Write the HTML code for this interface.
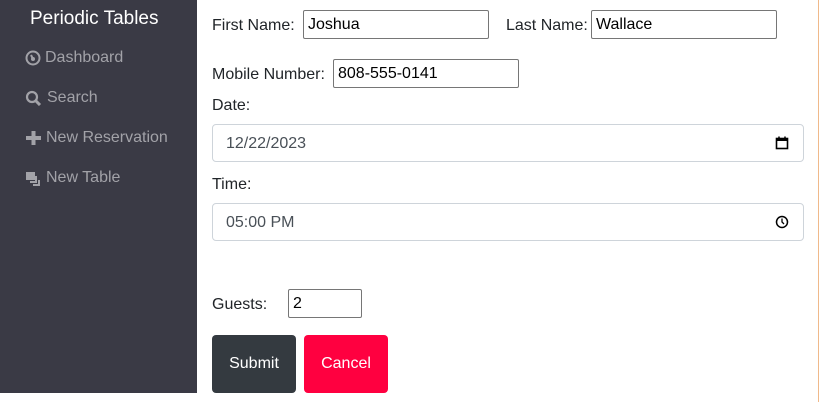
<!DOCTYPE html>
<html><head><meta charset="utf-8"><style>
*{box-sizing:border-box;margin:0;padding:0}
body{width:820px;height:402px;background:#fff;font-family:"Liberation Sans",sans-serif;position:relative;overflow:hidden;color:#212529}
.side{position:absolute;left:0;top:0;width:197px;height:393px;background:#3a3a45}
.title{position:absolute;left:30px;top:8px;color:#fff;font-size:19px}
.nav{position:absolute;left:25px;color:#a2a2a8;font-size:16px;display:flex;align-items:center}
.nav svg{margin-right:4px}
.a{position:absolute;font-size:16px;color:#212529}
.in{position:absolute;border:1px solid #767676;border-radius:2px;height:29px;font-size:16px;color:#000;padding:5px 0 0 4px}
.fc{position:absolute;left:212px;width:592px;height:38px;border:1px solid #ced4da;border-radius:4px;font-size:16px;color:#495057;padding:10px 0 0 13px}
.fc svg{position:absolute;right:14px;top:11px}
.btn{position:absolute;top:335px;width:84px;height:58px;border-radius:4px;color:#fff;font-size:16px;text-align:center;line-height:58px}
</style></head><body>
<div class="side">
<div class="title">Periodic Tables</div>
<div class="nav" style="top:49px"><svg width="16" height="16" viewBox="0 0 16 16"><circle cx="8" cy="8" r="6.5" fill="none" stroke="#a2a2a8" stroke-width="2"/><circle cx="8" cy="9" r="2" fill="#a2a2a8"/><path d="M8 9L6 5" stroke="#a2a2a8" stroke-width="2"/></svg>Dashboard</div>
<div class="nav" style="top:89px"><svg width="18" height="16" viewBox="0 0 18 16"><circle cx="7" cy="7" r="5" fill="none" stroke="#a2a2a8" stroke-width="2.2"/><path d="M11 11l4 4" stroke="#a2a2a8" stroke-width="3"/></svg>Search</div>
<div class="nav" style="top:129px"><svg width="17" height="16" viewBox="0 0 17 16"><path d="M8.5 1v14M1 8h15" stroke="#a2a2a8" stroke-width="4"/></svg>New Reservation</div>
<div class="nav" style="top:169px"><svg width="17" height="16" viewBox="0 0 17 16"><rect x="1" y="2" width="9" height="8" fill="#a2a2a8"/><path d="M11 6v6H5M14 10v5H8" stroke="#a2a2a8" stroke-width="2" fill="none"/></svg>New Table</div>
</div>
<div class="a" style="left:212px;top:17px">First Name:</div>
<div class="in" style="left:303px;top:10px;width:186px">Joshua</div>
<div class="a" style="left:506px;top:17px">Last Name:</div>
<div class="in" style="left:591px;top:10px;width:186px">Wallace</div>
<div class="a" style="left:212px;top:66px">Mobile Number:</div>
<div class="in" style="left:333px;top:59px;width:186px">808-555-0141</div>
<div class="a" style="left:212px;top:97px">Date:</div>
<div class="fc" style="top:124px">12/22/2023<svg width="14" height="14" viewBox="0 0 14 14"><rect x="1.5" y="2.5" width="11" height="10" fill="none" stroke="#000" stroke-width="1.6"/><rect x="1" y="2" width="12" height="3" fill="#000"/><path d="M4 0.5v2M10 0.5v2" stroke="#000" stroke-width="1.5"/></svg></div>
<div class="a" style="left:212px;top:176px">Time:</div>
<div class="fc" style="top:203px">05:00 PM<svg width="14" height="14" viewBox="0 0 14 14"><circle cx="7" cy="7" r="5.5" fill="none" stroke="#000" stroke-width="1.5"/><path d="M7 3.5V7l2 2" stroke="#000" stroke-width="1.3" fill="none"/></svg></div>
<div class="a" style="left:212px;top:296px">Guests:</div>
<div class="in" style="left:288px;top:289px;width:74px">2</div>
<div class="btn" style="left:212px;background:#343a40">Submit</div>
<div class="btn" style="left:304px;background:#ff0040">Cancel</div>
<div style="position:absolute;left:818px;top:0;width:1px;height:402px;background:#f0b98a"></div>
</body></html>
